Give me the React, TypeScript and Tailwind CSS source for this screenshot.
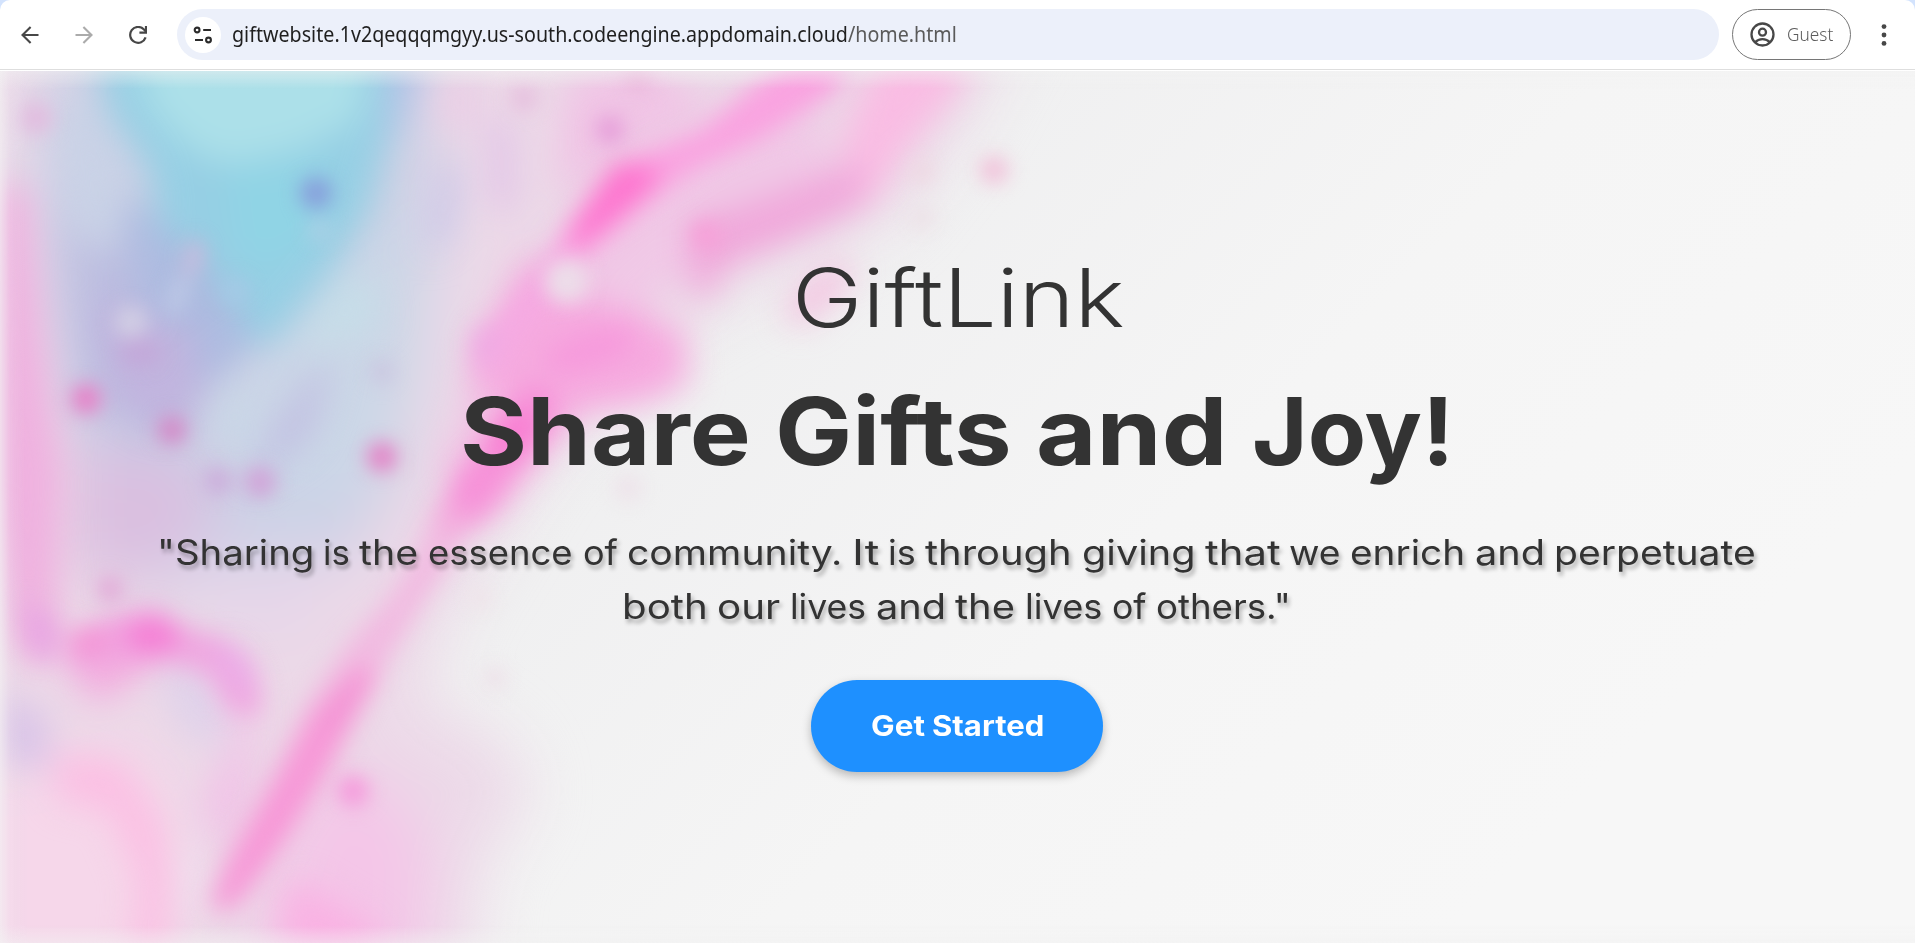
import React, { useLayoutEffect, useRef, useState } from "react";

type FitProps = { width: number; children: React.ReactNode };

/* Stretches a run of text horizontally so that it fills the given width. */
function Fit({ width, children }: FitProps) {
  const ref = useRef<HTMLSpanElement>(null);
  const [scale, setScale] = useState(1);
  useLayoutEffect(() => {
    if (ref.current) {
      setScale(width / ref.current.offsetWidth);
    }
  }, [width]);
  return (
    <span className="block shrink-0" style={{ width }}>
      <span ref={ref} className="inline-block origin-left whitespace-nowrap" style={{ transform: `scaleX(${scale})` }}>
        {children}
      </span>
    </span>
  );
}

type Word = [string, number];

function Words({ words }: { words: Word[] }) {
  return (
    <>
      {words.map(([text, width], i) => (
        <Fit key={i} width={width}>
          {text}
        </Fit>
      ))}
    </>
  );
}

const headline: Word[] = [
  ["Share", 291],
  ["Gifts", 237],
  ["and", 192],
  ["Joy!", 202],
];

const quoteTop: Word[] = [
  ['"Sharing', 156.9],
  ["is", 26.9],
  ["the", 59.6],
  ["essence", 144.8],
  ["of", 35],
  ["community.", 215.8],
  ["It", 26.8],
  ["is", 27.8],
  ["through", 147.2],
  ["giving", 113.3],
  ["that", 75.3],
  ["we", 51.1],
  ["enrich", 115.2],
  ["and", 70.3],
  ["perpetuate", 202],
];

const quoteBottom: Word[] = [
  ["both", 86.2],
  ["our", 63.3],
  ["lives", 76.3],
  ["and", 70.4],
  ["the", 60.5],
  ["lives", 77.5],
  ["of", 34.6],
  ['others."', 135],
];

function BackIcon() {
  return (
    <svg className="h-[18px] w-[18px]" viewBox="0 0 18 18" fill="none" stroke="#474747" strokeWidth="2.1">
      <path d="M17.5 9H1.8M9.6 0.9L1.5 9l8.1 8.1" />
    </svg>
  );
}

function ForwardIcon() {
  return (
    <svg className="h-[18px] w-[18px]" viewBox="0 0 18 18" fill="none" stroke="#ababab" strokeWidth="2.1">
      <path d="M0.5 9h15.7M8.4 0.9L16.5 9l-8.1 8.1" />
    </svg>
  );
}

function ReloadIcon() {
  return (
    <svg className="h-[18px] w-[18px]" viewBox="0 0 18 18" fill="none" stroke="#474747" strokeWidth="2.2">
      <path d="M16.6 11.3A7.9 7.9 0 1 1 14.7 3.3L16.9 5.6" />
      <path d="M17 0v6.6h-6.6" />
    </svg>
  );
}

function TuneIcon() {
  return (
    <svg className="h-[18px] w-[20px]" viewBox="0 0 20 18" fill="none" stroke="#2b2b2b" strokeWidth="2.1">
      <circle cx="4.1" cy="4" r="2.4" />
      <path d="M10.2 4H18M2 14h8" />
      <circle cx="15.5" cy="14" r="2.4" />
    </svg>
  );
}

function GuestIcon() {
  return (
    <svg className="h-[25px] w-[25px] shrink-0" viewBox="0 0 25 25" fill="none" stroke="#474747" strokeWidth="2.3">
      <circle cx="12.5" cy="12.5" r="11" />
      <circle cx="12.5" cy="10.2" r="3.5" />
      <path d="M5 20.4c4-4.3 11-4.3 15 0" />
    </svg>
  );
}

function BrowserBar() {
  return (
    <div className="h-[71px] bg-[#d3e3fd]">
      <div className="flex h-[71px] items-start rounded-t-[10px] bg-white">
        <div className="flex h-[70px] w-full items-center border-b border-[#dedede] pl-[21px]">
          <BackIcon />
          <div className="w-9" />
          <ForwardIcon />
          <div className="w-9" />
          <ReloadIcon />
          <div className="ml-[30px] flex h-[51px] w-[1542px] items-center rounded-full bg-[#ecf0fa] pl-2">
            <div className="flex h-9 w-9 items-center justify-center rounded-full bg-white">
              <TuneIcon />
            </div>
            <div className="ml-[11px] font-['Noto_Sans',sans-serif] text-[21px] text-[#1f1f1f]">
              <Fit width={725}>
                giftwebsite.1v2qeqqqmgyy.us-south.codeengine.appdomain.cloud<span className="text-[#5a5a5a]">/home.html</span>
              </Fit>
            </div>
          </div>
          <div className="ml-[13px] flex h-[51px] w-[119px] items-center rounded-full border-[1.5px] border-[#767676] pl-[17px]">
            <GuestIcon />
            <div className="ml-[12px] font-['Noto_Sans',sans-serif] text-[18px] font-[350] text-[#5c5c5c]">
              <Fit width={46}>Guest</Fit>
            </div>
          </div>
          <svg className="ml-[30px] h-[24px] w-[6px]" viewBox="0 0 6 24" fill="#474747">
            <circle cx="3" cy="3.6" r="2.4" />
            <circle cx="3" cy="12" r="2.4" />
            <circle cx="3" cy="20.4" r="2.4" />
          </svg>
        </div>
      </div>
    </div>
  );
}

function PaintBackdrop() {
  return (
    <svg className="absolute inset-0 h-full w-full" viewBox="0 71 1915 872" preserveAspectRatio="none">
      <defs>
        <linearGradient id="paper" x1="0" y1="0" x2="1" y2="0.45">
          <stop offset="0" stopColor="#e9e9eb" />
          <stop offset="0.4" stopColor="#efeff0" />
          <stop offset="0.7" stopColor="#f5f5f5" />
          <stop offset="1" stopColor="#f7f7f7" />
        </linearGradient>
        <linearGradient id="edgeL" x1="0" y1="0" x2="1" y2="0">
          <stop offset="0" stopColor="#f4f4f4" stopOpacity="0.6" />
          <stop offset="0.4" stopColor="#f4f4f4" stopOpacity="0.12" />
          <stop offset="1" stopColor="#f4f4f4" stopOpacity="0" />
        </linearGradient>
        <linearGradient id="edgeT" x1="0" y1="0" x2="0" y2="1">
          <stop offset="0" stopColor="#f2f2f2" stopOpacity="0.5" />
          <stop offset="1" stopColor="#f2f2f2" stopOpacity="0" />
        </linearGradient>
        <filter id="b30" colorInterpolationFilters="sRGB" filterUnits="userSpaceOnUse" x="-200" y="-130" width="2300" height="1300"><feGaussianBlur stdDeviation="30" /></filter>
        <filter id="b16" colorInterpolationFilters="sRGB" filterUnits="userSpaceOnUse" x="-200" y="-130" width="2300" height="1300"><feGaussianBlur stdDeviation="17" /></filter>
        <filter id="b11" colorInterpolationFilters="sRGB" filterUnits="userSpaceOnUse" x="-200" y="-130" width="2300" height="1300"><feGaussianBlur stdDeviation="12" /></filter>
        <filter id="b9" colorInterpolationFilters="sRGB" filterUnits="userSpaceOnUse" x="-200" y="-130" width="2300" height="1300"><feGaussianBlur stdDeviation="9.5" /></filter>
      </defs>
      <rect x="0" y="71" width="1915" height="872" fill="url(#paper)" />

      <g filter="url(#b30)">
        <path d="M-80 -20H1040L960 130L890 220L740 290L650 340L540 460L450 610L420 700L500 740L530 790L480 870L470 1020H-80Z" fill="#ecd9e8" />
        <path d="M60 0H440L435 250L400 470L350 560L250 600L120 580L60 420L30 200Z" fill="#ccd1e6" />
        <path d="M330 260L430 200L420 380L360 500L220 480L240 380Z" fill="#cbd7e7" />
        <path d="M60 230L150 200L210 350L170 440L80 400Z" fill="#bbbce0" />
        <path d="M70 440L200 460L220 520L150 580L70 570Z" fill="#dabfe0" />
        <path d="M180 560L340 550L300 640L190 620Z" fill="#e5d6e9" />
        <path d="M-20 780L150 740L190 830L160 990H-20Z" fill="#f6d7ea" />
        <path d="M300 800L380 770L430 850L420 990H250Z" fill="#f4c6e8" />
      </g>

      <g filter="url(#b16)">
        <path d="M-10 180L28 190L42 330L62 470L58 590L54 670L14 650L-10 500Z" fill="#efb1df" />
        <path d="M60 100L95 110L130 190L110 260L70 220Z" fill="#c9d2e6" />
        <path d="M90 0H415L390 130L370 210L332 270L272 345L228 345L200 305L160 240L150 170L108 110Z" fill="#96cfe4" />
        <path d="M120 200L195 250L240 310L255 345L205 385L150 340Z" fill="#adbbe0" />
        <path d="M95 300L195 330L200 400L165 430L110 400Z" fill="#c1b4de" />
        <path d="M225 170L330 160L322 230L270 270L235 250Z" fill="#90d4e5" />
        <path d="M120 0H380L360 120L300 150L230 165L190 150L150 110Z" fill="#ace0e9" />
        <path d="M390 20L428 20L408 110L388 150Z" fill="#b6c1e7" />
        <path d="M330 290L360 270L385 320L330 345L300 350Z" fill="#c6dde8" />
        <path d="M215 400L250 380L250 440L225 455Z" fill="#c9d7e6" />
        <path d="M305 380L335 360L310 440L250 480L270 430Z" fill="#c2c1e2" />
        <path d="M440 170L460 160L452 230L425 260Z" fill="#cac5e8" />
        <path d="M492 120L510 120L512 210L494 210Z" fill="#debde7" />
        <path d="M440 75L480 75L480 130L440 130Z" fill="#ebcee5" />
        <path d="M570 80L640 60L720 110L600 170L560 200L560 125Z" fill="#f0c4e5" />
        <path d="M560 240L720 140L820 110L830 180L720 240L630 320L560 330Z" fill="#f0c8e6" />
        <path d="M895 20L985 20L955 95L905 150L875 200L835 210L845 130Z" fill="#f9bce3" />
        <path d="M690 225L790 190L860 160L865 205L790 240L725 265L705 305L690 290Z" fill="#f0a6da" />
        <path d="M785 310L845 258L848 280L800 325Z" fill="#f6add9" />
        <path d="M550 285L660 320L686 330L688 385L640 405L580 412L530 470L490 520L455 480L470 400L475 350L505 300L530 250Z" fill="#f6aadf" />
        <path d="M478 390L500 390L505 420L480 460L455 500L440 470Z" fill="#f2bfe4" />
        <path d="M50 755L120 760L160 820L172 880L160 990L130 990L140 880L110 810L60 800Z" fill="#fbbfe3" />
        <path d="M0 690L50 720L45 770L0 760Z" fill="#d9c4e8" />
        <path d="M185 830L205 870L200 920L180 900Z" fill="#f0e2ef" />
        <path d="M295 880L380 930L360 980L290 970L280 900Z" fill="#f9b2e3" />
        <path d="M160 670L190 650L225 700L220 750L180 730Z" fill="#dfd2ea" />
        <path d="M70 640L150 630L160 655L110 700L80 695Z" fill="#f3aedf" />
        <path d="M228 640L255 690L250 800L222 860L200 800L236 740Z" fill="#f1c3e7" />
        <path d="M860 650L240 900Z" fill="#f1c3e7" />
      </g>

      <g filter="url(#b11)">
        <path d="M860 50L832 95L765 138L700 168L652 200L605 240L565 275L550 262L560 235L588 195L618 160L700 130L750 88L800 50Z" fill="#f9a3e0" />
        <path d="M614 162L662 170L648 192L605 228L577 248L572 232L596 192Z" fill="#fd76cf" />
        <path d="M555 245L572 252L545 300L515 345L485 380L475 358L515 300Z" fill="#f5a9e2" />
        <ellipse cx="590" cy="350" rx="48" ry="19" transform="rotate(-18 590 350)" fill="#f69bdc" />
        <ellipse cx="485" cy="345" rx="13" ry="20" fill="#eeaae4" />
        <path d="M525 385L558 392L545 432L508 475L480 525L450 540L436 515L462 470L492 440Z" fill="#f691d8" />
        <ellipse cx="512" cy="434" rx="28" ry="18" transform="rotate(-40 512 434)" fill="#f87dd1" />
        <path d="M434 505L478 510L456 552L422 604L388 660L368 695L336 760L302 816L256 885L232 912L206 910L218 870L267 780L306 705L347 645L392 595L418 550Z" fill="#f2b2de" opacity="0.8" />
        <path d="M360 666L379 676L348 728L318 785L282 844L232 908L212 906L238 848L282 773L313 714Z" fill="#f793d5" opacity="0.9" />
        <ellipse cx="342" cy="705" rx="8" ry="32" transform="rotate(28 342 705)" fill="#f291d3" />
        <path d="M65 636L110 616L155 606L184 626L226 638L258 680L260 714L232 712L206 674L165 662L110 662L75 670Z" fill="#f0a2df" opacity="0.9" />
        <ellipse cx="152" cy="636" rx="27" ry="17" fill="#f57fd5" />
        <ellipse cx="90" cy="643" rx="20" ry="10" fill="#f58fd2" />
        <ellipse cx="235" cy="668" rx="17" ry="30" transform="rotate(-35 235 668)" fill="#ecabe6" />
        <path d="M22 600L56 620L54 662L30 652Z" fill="#e8a6e3" />
      </g>

      <g filter="url(#b9)">
        <circle cx="567" cy="281" r="22" fill="#ecdde9" />
        <circle cx="610" cy="130" r="14" fill="#e69dd9" />
        <circle cx="524" cy="98" r="14" fill="#e6bfde" />
        <circle cx="638" cy="76" r="14" fill="#eab5da" />
        <circle cx="36" cy="118" r="16" fill="#e2bbdf" />
        <circle cx="316" cy="193" r="16" fill="#879ddb" />
        <circle cx="320" cy="231" r="11" fill="#accfe5" />
        <ellipse cx="193" cy="258" rx="10" ry="19" transform="rotate(15 193 258)" fill="#c5bcde" />
        <ellipse cx="178" cy="295" rx="10" ry="22" transform="rotate(20 178 295)" fill="#bcc7e5" />
        <circle cx="236" cy="292" r="13" fill="#a5cae6" />
        <circle cx="131" cy="322" r="16" fill="#d2cfe4" />
        <ellipse cx="140" cy="352" rx="20" ry="14" fill="#c3a8d9" />
        <circle cx="86" cy="399" r="15" fill="#e87dc6" />
        <circle cx="172" cy="430" r="14" fill="#d586c6" />
        <circle cx="382" cy="457" r="15" fill="#e380c5" />
        <circle cx="382" cy="372" r="11" fill="#c9c3df" />
        <circle cx="218" cy="481" r="14" fill="#ccacdb" />
        <circle cx="260" cy="482" r="16" fill="#d1a3d8" />
        <circle cx="110" cy="589" r="13" fill="#e2a8d7" />
        <circle cx="994" cy="170" r="14" fill="#f1c0d9" />
        <circle cx="922" cy="172" r="12" fill="#eed7e2" />
        <circle cx="922" cy="218" r="12" fill="#ece0e6" />
        <circle cx="353" cy="791" r="16" fill="#f59bdc" />
        <circle cx="706" cy="235" r="15" fill="#f6a0d8" />
        <circle cx="628" cy="488" r="13" fill="#ede1e9" />
        <circle cx="480" cy="598" r="11" fill="#efe3e9" />
        <circle cx="495" cy="678" r="11" fill="#eddfe8" />
      </g>

      <rect x="0" y="71" width="26" height="872" fill="url(#edgeL)" />
      <rect x="0" y="71" width="1915" height="18" fill="url(#edgeT)" />
      <rect x="0" y="925" width="1915" height="18" fill="url(#edgeT)" transform="rotate(180 957.5 934)" />
    </svg>
  );
}

export default function App() {
  return (
    <div className="flex h-[943px] w-[1915px] flex-col overflow-hidden bg-white">
      <BrowserBar />
      <main className="relative h-[872px]">
        <PaintBackdrop />
        <div className="relative flex flex-col items-center pt-[175px] font-['Inter','Montserrat',sans-serif] text-[#333333]">
          <h1 className="h-[104px] text-[81px] font-[330] leading-[104px]">
            <Fit width={332}>GiftLink</Fit>
          </h1>
          <h2 className="mt-[23px] flex h-[116px] gap-[24px] pr-[2px] text-[93px] font-bold leading-[116px]">
            <Words words={headline} />
          </h2>
          <div className="mt-[36px] flex flex-col items-center pr-[2px] text-[35px] font-[385] leading-[54px] [text-shadow:2px_4px_4px_rgba(0,0,0,0.3)]">
            <p className="flex h-[54px] gap-[9.4px]">
              <Words words={quoteTop} />
            </p>
            <p className="flex h-[54px] gap-[9.4px]">
              <Words words={quoteBottom} />
            </p>
          </div>
          <button className="mr-px mt-[47px] flex h-[92px] w-[292px] items-center justify-center gap-[7px] rounded-[46px] bg-[#1e90ff] text-left text-[28px] font-bold text-white shadow-[0_4px_10px_rgba(0,0,0,0.25)]">
            <Fit width={54}>Get</Fit>
            <Fit width={112}>Started</Fit>
          </button>
        </div>
      </main>
    </div>
  );
}
